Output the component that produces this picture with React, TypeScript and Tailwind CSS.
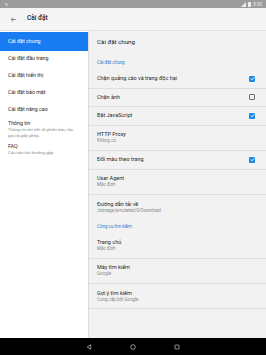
import React from "react";

function Check({ on }: { on: boolean }) {
  if (on)
    return (
      <div className="w-[6px] h-[6px] rounded-[1px] bg-[#1e88e5] flex items-center justify-center">
        <svg width="5" height="5" viewBox="0 0 10 10">
          <path d="M1.5 5.2 L4 7.6 L8.6 2.6" stroke="white" strokeWidth="1.8" fill="none" />
        </svg>
      </div>
    );
  return <div className="w-[6px] h-[6px] rounded-[1px] border border-[#707070] box-border" />;
}

function Row({ title, sub, check, h, border = true }: { title: string; sub?: string; check?: boolean; h: string; border?: boolean }) {
  return (
    <div className={`flex items-center justify-between pl-[8px] pr-[11px] ${h} ${border ? "border-b border-[#dedede]" : ""}`}>
      <div className="flex flex-col">
        <div className="text-[5.5px] leading-[7px] text-[#2a2a2a]">{title}</div>
        {sub && <div className="text-[4.5px] leading-[6px] text-[#8c8c8c]">{sub}</div>}
      </div>
      {check !== undefined && <Check on={check} />}
    </div>
  );
}

function Left({ title, sub, active, h = "h-[16.75px]" }: { title: string; sub?: string; active?: boolean; h?: string }) {
  return (
    <div className={`flex flex-col justify-center px-[8px] ${h} ${active ? "bg-[#1a7cf2] text-white" : "text-[#2a2a2a]"}`}>
      <div className="text-[5.3px] leading-[7px]">{title}</div>
      {sub && <div className="text-[4.3px] leading-[6px] text-[#8c8c8c]">{sub}</div>}
    </div>
  );
}

export default function App() {
  return (
    <div className="w-[266px] h-[355px] flex flex-col overflow-hidden font-[family-name:Roboto,sans-serif] bg-white">
      <div className="h-[8px] bg-[#9c9c9c] flex items-center justify-between px-[4px]">
        <svg width="5" height="5" viewBox="0 0 10 10">
          <path d="M2 3 L7 8 M3 2 L8 7" stroke="#eee" strokeWidth="1.5" />
        </svg>
        <div className="flex items-center gap-[2px]">
          <svg width="5" height="5" viewBox="0 0 10 10">
            <path d="M0 10 L10 0 L10 10 Z" fill="#eee" />
          </svg>
          <div className="w-[3px] h-[5px] bg-[#eee] rounded-[0.5px]" />
          <div className="text-[4.5px] leading-[5px] text-[#eee]">8:00</div>
        </div>
      </div>
      <div className="h-[23px] bg-[#f5f5f5] border-b border-[#e2e2e2] flex items-center">
        <svg className="ml-[10px]" width="7" height="7" viewBox="0 0 24 24">
          <path d="M20 12 H5 M11 5 L4 12 L11 19" stroke="#333" strokeWidth="2" fill="none" />
        </svg>
        <div className="ml-[10px] text-[6.5px] font-medium text-[#222]">Cài đặt</div>
      </div>
      <div className="flex-1 flex min-h-0">
        <div className="w-[88px] bg-white flex flex-col pt-[1px]">
          <Left title="Cài đặt chung" active h="h-[18.5px]" />
          <Left title="Cài đặt đầu trang" />
          <Left title="Cài đặt hiển thị" />
          <Left title="Cài đặt bảo mật" />
          <Left title="Cài đặt nâng cao" />
          <div className="flex flex-col justify-center px-[8px] h-[23px] text-[#2a2a2a]">
            <div className="text-[5.3px] leading-[7px]">Thông tin</div>
            <div className="text-[4.3px] leading-[6px] text-[#8c8c8c]">Thông tin chi tiết về phiên bản, tác</div>
            <div className="text-[4.3px] leading-[6px] text-[#8c8c8c]">giả và giấy phép.</div>
          </div>
          <Left title="FAQ" sub="Các câu hỏi thường gặp" h="h-[18px]" />
        </div>
        <div className="flex-1 bg-[#f2f2f2] border-l border-[#dcdcdc] flex flex-col">
          <div className="h-[23px] flex items-center pl-[8px] text-[6.2px] text-[#222]">Cài đặt chung</div>
          <div className="h-[16px] flex items-center pl-[8px] pt-[3px] text-[4.5px] text-[#1e7fd9]">Cài đặt chung</div>
          <Row title="Chặn quảng cáo và trang độc hại" check={true} h="h-[18.5px]" />
          <Row title="Chặn ảnh" check={false} h="h-[18.5px]" />
          <Row title="Bật JavaScript" check={true} h="h-[18.5px]" />
          <Row title="HTTP Proxy" sub="Không có" h="h-[25.5px]" />
          <Row title="Đổi màu theo trang" check={true} h="h-[18.5px]" />
          <Row title="User Agent" sub="Mặc định" h="h-[25.5px]" />
          <Row title="Đường dẫn tải về" sub="/storage/emulated/0/Download" h="h-[25px]" border={false} />
          <div className="h-[13.5px] flex items-center pl-[8px] pt-[2px] text-[4.5px] text-[#1e7fd9]">Công cụ tìm kiếm</div>
          <Row title="Trang chủ" sub="Mặc định" h="h-[25px]" />
          <Row title="Máy tìm kiếm" sub="Google" h="h-[25.5px]" />
          <Row title="Gợi ý tìm kiếm" sub="Cung cấp bởi Google" h="h-[25px]" />
        </div>
      </div>
      <div className="h-[17px] bg-black flex items-center justify-center gap-[38px]">
        <svg width="6" height="6" viewBox="0 0 12 12">
          <path d="M9.5 1.5 L2.5 6 L9.5 10.5 Z" stroke="#ddd" strokeWidth="1.3" fill="none" strokeLinejoin="round" />
        </svg>
        <svg width="6" height="6" viewBox="0 0 12 12">
          <circle cx="6" cy="6" r="4.6" stroke="#ddd" strokeWidth="1.3" fill="none" />
        </svg>
        <svg width="6" height="6" viewBox="0 0 12 12">
          <rect x="2" y="2" width="8" height="8" rx="1" stroke="#ddd" strokeWidth="1.3" fill="none" />
        </svg>
      </div>
    </div>
  );
}
